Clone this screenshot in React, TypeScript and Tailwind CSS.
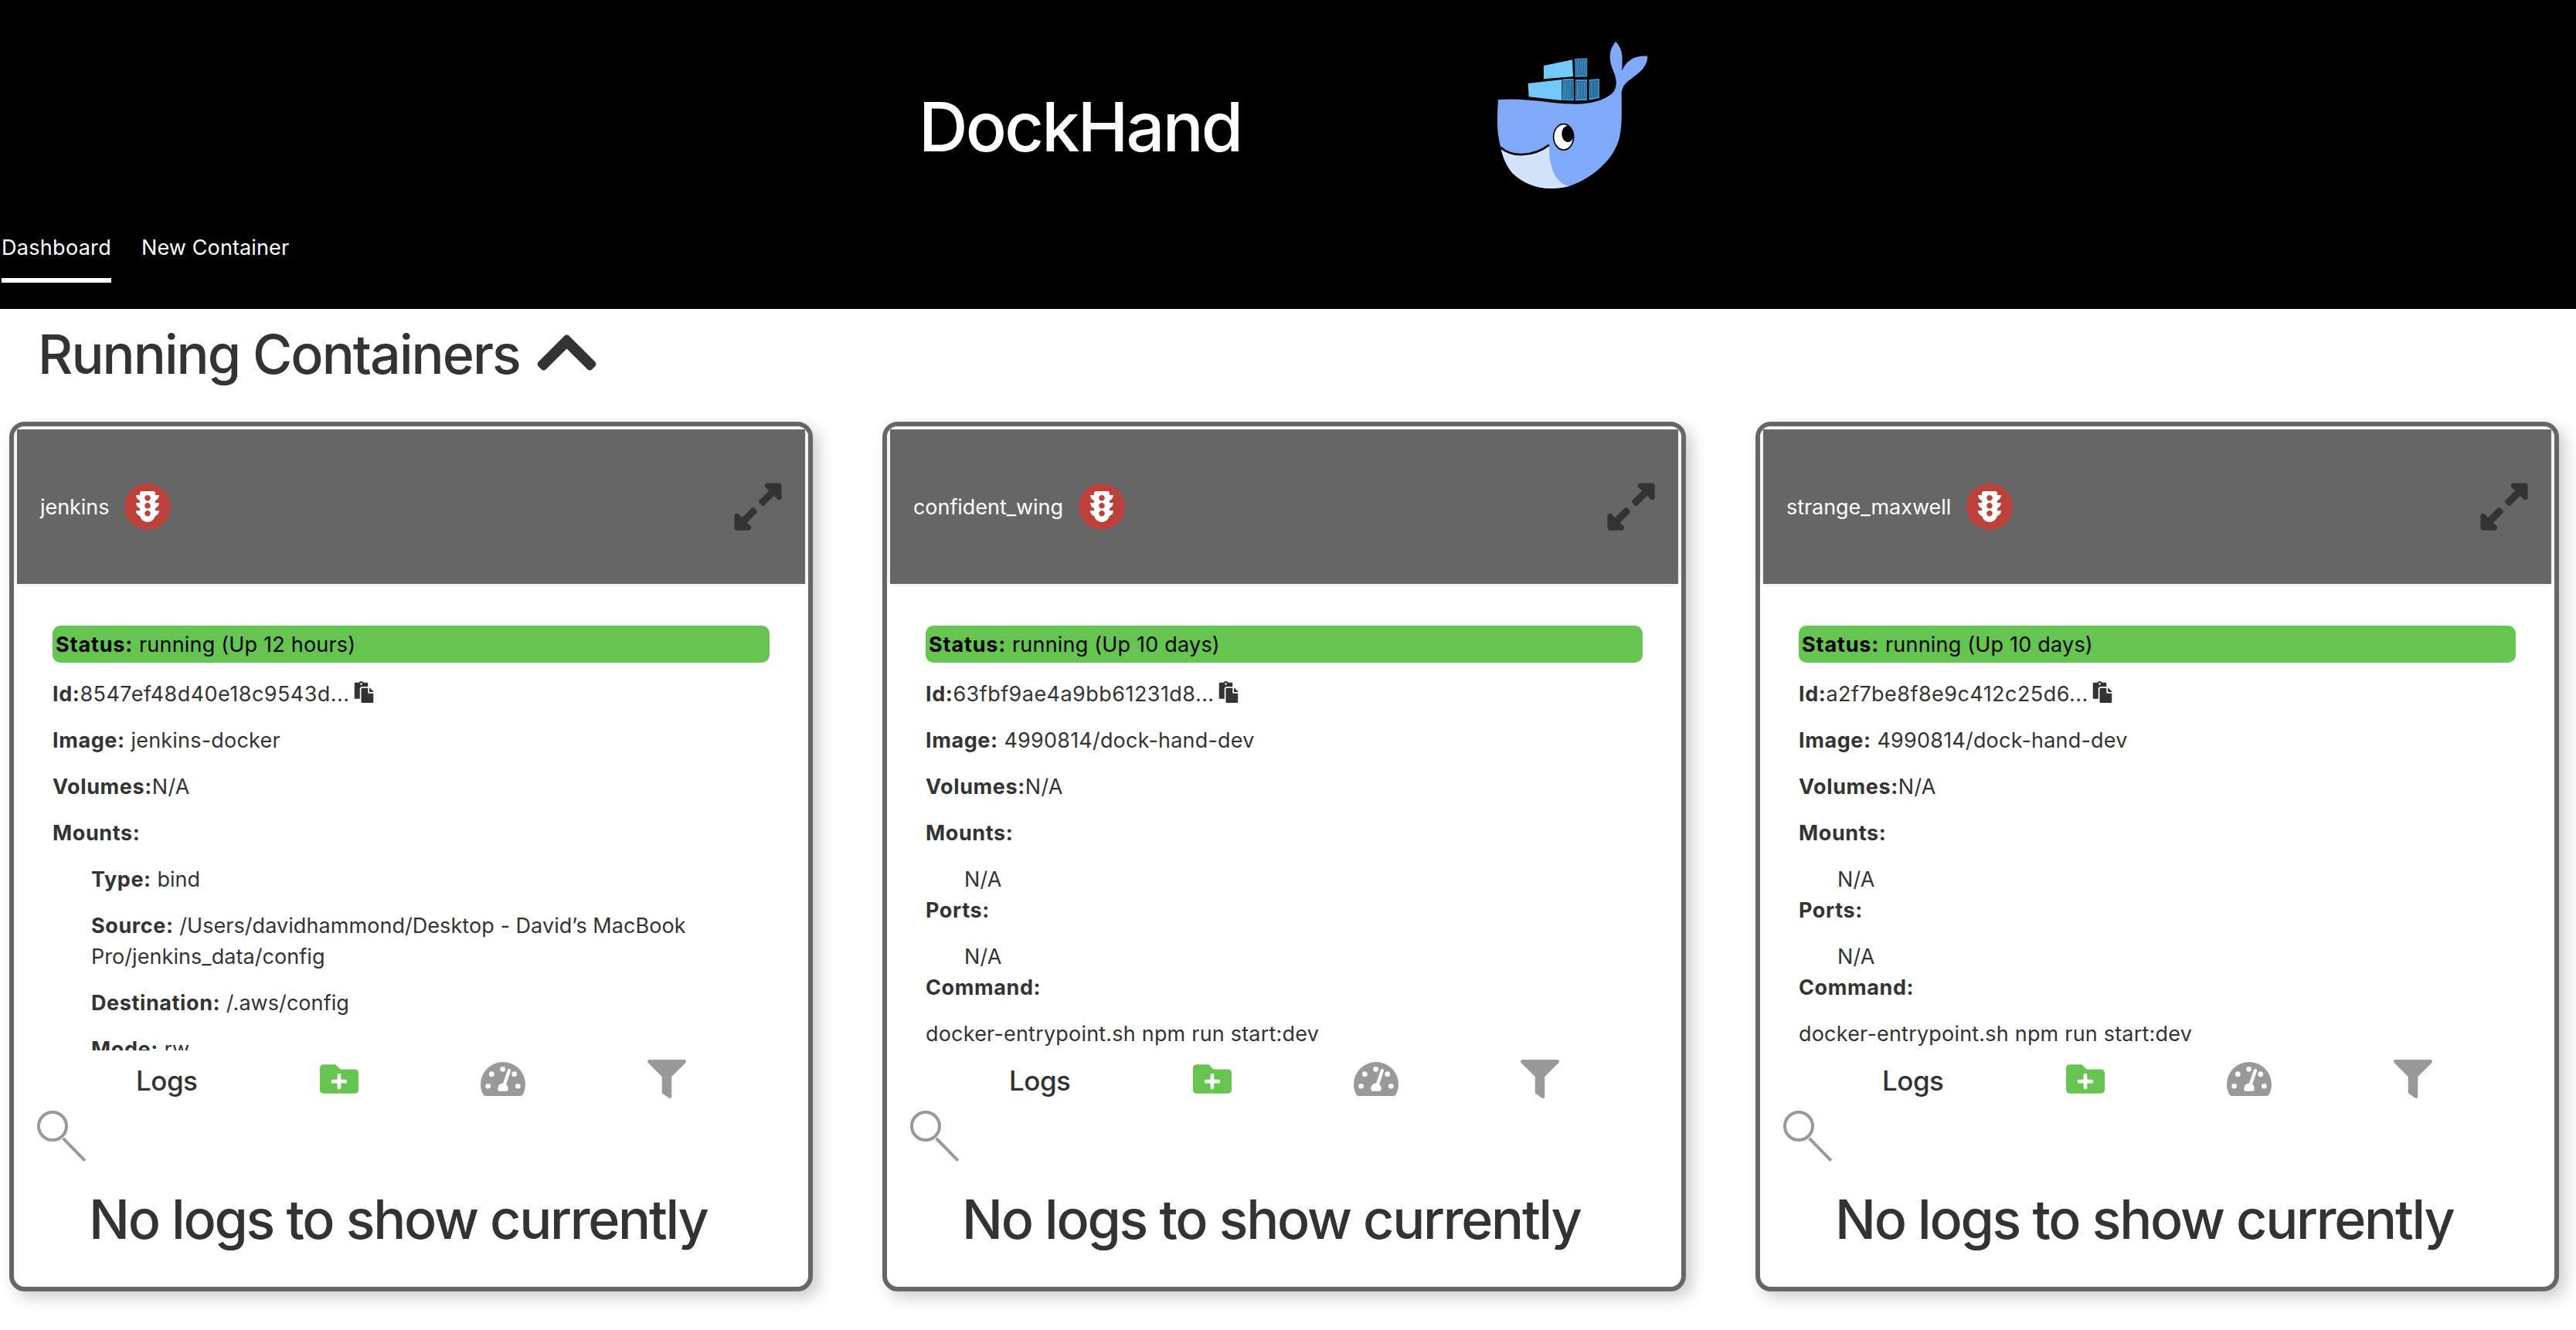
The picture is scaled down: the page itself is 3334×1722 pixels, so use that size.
import React from "react";
import {
  FaChevronUp,
  FaExpandAlt,
  FaFilter,
  FaFolderPlus,
  FaPaste,
  FaTrafficLight,
} from "react-icons/fa";

type Mount = { label: string; value: string };

type Container = {
  name: string;
  uptime: string;
  id: string;
  image: string;
  mounts: Mount[];
};

const containers: Container[] = [
  {
    name: "jenkins",
    uptime: "Up 12 hours",
    id: "8547ef48d40e18c9543d...",
    image: "jenkins-docker",
    mounts: [
      { label: "Type:", value: "bind" },
      {
        label: "Source:",
        value: "/Users/davidhammond/Desktop - David’s MacBook Pro/jenkins_data/config",
      },
      { label: "Destination:", value: "/.aws/config" },
      { label: "Mode:", value: "rw" },
    ],
  },
  {
    name: "confident_wing",
    uptime: "Up 10 days",
    id: "63fbf9ae4a9bb61231d8...",
    image: "4990814/dock-hand-dev",
    mounts: [],
  },
  {
    name: "strange_maxwell",
    uptime: "Up 10 days",
    id: "a2f7be8f8e9c412c25d6...",
    image: "4990814/dock-hand-dev",
    mounts: [],
  },
];

function Whale() {
  return (
    <svg viewBox="0 0 780 720" className="mt-[30px] h-[240px] w-[260px]">
      <path
        fill="#80a9f9"
        d="M117 297C180 292 235 298 290 304C370 315 450 321 513 299C560 281 578 262 575 225C572 190 551 170 551 132C551 105 562 85 573 72C590 88 599 110 599 140L598 185C610 150 645 122 697 128C697 165 672 188 642 209C615 229 600 240 596 270C596 330 600 390 588 444C568 530 480 605 390 634C300 655 226 634 172 582C148 552 133 520 126 480C110 420 113 360 117 297Z"
      />
      <path
        fill="#d4e3fc"
        d="M129 488C178 522 260 520 315 474C315 560 335 615 390 634C300 655 226 634 172 582C148 552 137 524 129 488Z"
      />
      <path
        d="M126 482C168 520 250 522 315 473"
        fill="none"
        stroke="#000"
        strokeWidth="8"
      />
      <ellipse cx="371" cy="442" rx="39" ry="50" fill="#fff" stroke="#000" strokeWidth="5" />
      <path
        fill="#000"
        d="M384 399C400 398 410 420 410 442C406 455 398 462 388 462C374 460 364 447 364 431C364 414 372 402 384 399Z"
      />
      <g fill="#72c9fb">
        <path d="M294 165L405 142L408 207L294 217Z" />
        <path d="M233 234L364 219L364 300L236 286Z" />
      </g>
      <g fill="#4096cf">
        <path d="M414 138L463 136L463 208L416 209Z" />
        <path d="M367 217L410 216L411 301L366 299Z" />
        <path d="M417 219L462 219L462 300L417 301Z" />
        <path d="M470 219L510 216L510 290L470 299Z" />
      </g>
      <g fill="none" stroke="#0c3550" strokeWidth="2">
        <path d="M419 143h7l3 59h-8zM433 142h8l2 59h-7zM449 142h8v59h-7z" />
        <path d="M373 225l8 -1l1 69l-9 -1zM387 224l6 -1l4 71l-8 -1zM400 224l6 -1v70l-4 -1z" />
        <path d="M421 226h8l2 66h-10zM436 226h7l2 66h-8zM449 226h8v65h-7z" />
        <path d="M475 226l7 -1v63l-7 2zM487 225l6 -1v62l-6 2zM498 224l6 -1v60l-6 2z" />
      </g>
    </svg>
  );
}

function Gauge() {
  return (
    <svg viewBox="66 45 174 132" className="mt-[15px] h-[44px] w-[58px] text-[#999]">
      <path
        fill="currentColor"
        d="M153 45A87 87 0 0 1 240 132C240 147 236 160 230 171C228 175 225 177 221 177H85C81 177 78 175 76 171C70 160 66 147 66 132A87 87 0 0 1 153 45Z"
      />
      <g fill="#fff">
        <circle cx="95" cy="139" r="10" />
        <circle cx="109" cy="92" r="10" />
        <circle cx="152" cy="73" r="10" />
        <circle cx="197" cy="92" r="10" />
        <circle cx="211" cy="139" r="10" />
      </g>
      <path d="M177 78L157 136" stroke="#999" strokeWidth="22" strokeLinecap="round" />
      <path d="M177 78L157 136" stroke="#fff" strokeWidth="13" strokeLinecap="round" />
      <path fill="#fff" d="M136 158A20 20 0 1 1 170 158Z" />
    </svg>
  );
}

function SearchIcon() {
  return (
    <svg
      viewBox="0 0 70 74"
      className="ml-[28px] mt-1 h-[74px] w-[70px] text-[#999]"
      fill="none"
      stroke="currentColor"
      strokeWidth="4"
    >
      <circle cx="22" cy="24" r="18" />
      <path d="M35.7 39.8L63.8 68.6" />
    </svg>
  );
}

function Label({ children }: { children: React.ReactNode }) {
  return <strong className="font-bold tracking-[0.6px]">{children}</strong>;
}

function Card({ data }: { data: Container }) {
  return (
    <article className="flex h-[1126px] w-[1040px] flex-col rounded-[20px] border-[6px] border-[#666] bg-white shadow-[8px_8px_20px_rgba(0,0,0,0.2)]">
      <div className="rounded-[14px] bg-[#f4f4f4] p-1">
        <header className="flex h-[200px] items-center bg-[#666] pl-[30px] pr-[26px]">
          <span className="pt-0.5 tracking-[-0.05px] text-white">{data.name}</span>
          <span className="ml-5 flex size-[60px] items-center justify-center rounded-full bg-[#bb413a] text-white">
            <FaTrafficLight size={40} />
          </span>
          <FaExpandAlt size={70} className="ml-auto" />
        </header>
      </div>

      <div className="h-[600px] overflow-hidden px-[50px] pt-[50px]">
        <p className="rounded-[10px] bg-[#65c550] px-1 pb-[3px] pt-[5px] text-black">
          <strong className="font-bold tracking-[0.85px]">Status:</strong> running ({data.uptime})
        </p>
        <div className="mt-[21px] flex">
          <Label>Id:</Label>
          <span className="tracking-[0.45px]">{data.id}</span>
          <FaPaste size={28} className="ml-1 mt-[3px]" />
        </div>
        <p className="mt-5">
          <Label>Image:</Label> {data.image}
        </p>
        <p className="mt-5">
          <Label>Volumes:</Label>N/A
        </p>
        <p className="mt-5">
          <Label>Mounts:</Label>
        </p>
        {data.mounts.length > 0 ? (
          data.mounts.map((m) => (
            <p key={m.label} className="ml-[50px] mt-5 w-[790px] tracking-[0.06px]">
              <Label>{m.label}</Label> {m.value}
            </p>
          ))
        ) : (
          <>
            <p className="ml-[50px] mt-5">N/A</p>
            <p>
              <Label>Ports:</Label>
            </p>
            <p className="ml-[50px] mt-5">N/A</p>
            <p>
              <Label>Command:</Label>
            </p>
            <p className="mt-5">docker-entrypoint.sh npm run start:dev</p>
          </>
        )}
      </div>

      <div className="flex h-[70px] items-start pl-[158px]">
        <span className="mt-[19px] w-[238px] text-[35px] font-medium tracking-[-0.5px]">
          Logs
        </span>
        <FaFolderPlus size={50} className="mt-3 text-[#65c550]" />
        <div className="ml-[158px]">
          <Gauge />
        </div>
        <FaFilter size={50} className="ml-[158px] mt-3 text-[#999]" />
      </div>
      <SearchIcon />
      <h2 className="ml-[97px] mt-[35px] whitespace-nowrap text-[70px] font-medium leading-[72px] tracking-[-2.26px]">
        No logs to show currently
      </h2>
    </article>
  );
}

export default function App() {
  return (
    <div className="h-[1722px] w-[3334px] overflow-hidden bg-white font-['Inter',sans-serif] text-[27px] leading-[40px] tracking-[0.2px] text-[#333]">
      <div className="h-[400px] bg-black text-white">
        <div className="flex h-[301px] items-start pl-[1189px]">
          <h1 className="mt-[120px] w-[711px] text-[88px] font-medium leading-[88px] tracking-[-2.75px]">
            DockHand
          </h1>
          <Whale />
        </div>
        <nav className="flex items-start gap-[39px] pl-0.5">
          <a className="w-[142px] whitespace-nowrap border-b-[6px] border-white pb-[19px] tracking-[0.3px]">
            Dashboard
          </a>
          <a className="tracking-[0.12px]">New Container</a>
        </nav>
      </div>

      <div className="flex h-[146px] items-start pl-[49px]">
        <h2 className="mt-[23px] w-[640px] whitespace-nowrap text-[70px] font-medium leading-[72px] tracking-[-1.94px]">
          Running Containers
        </h2>
        <FaChevronUp size={89} className="mt-3" />
      </div>

      <main className="flex gap-[90px] pl-3">
        {containers.map((c) => (
          <div key={c.name} className="shrink-0">
            <Card data={c} />
          </div>
        ))}
      </main>
    </div>
  );
}
